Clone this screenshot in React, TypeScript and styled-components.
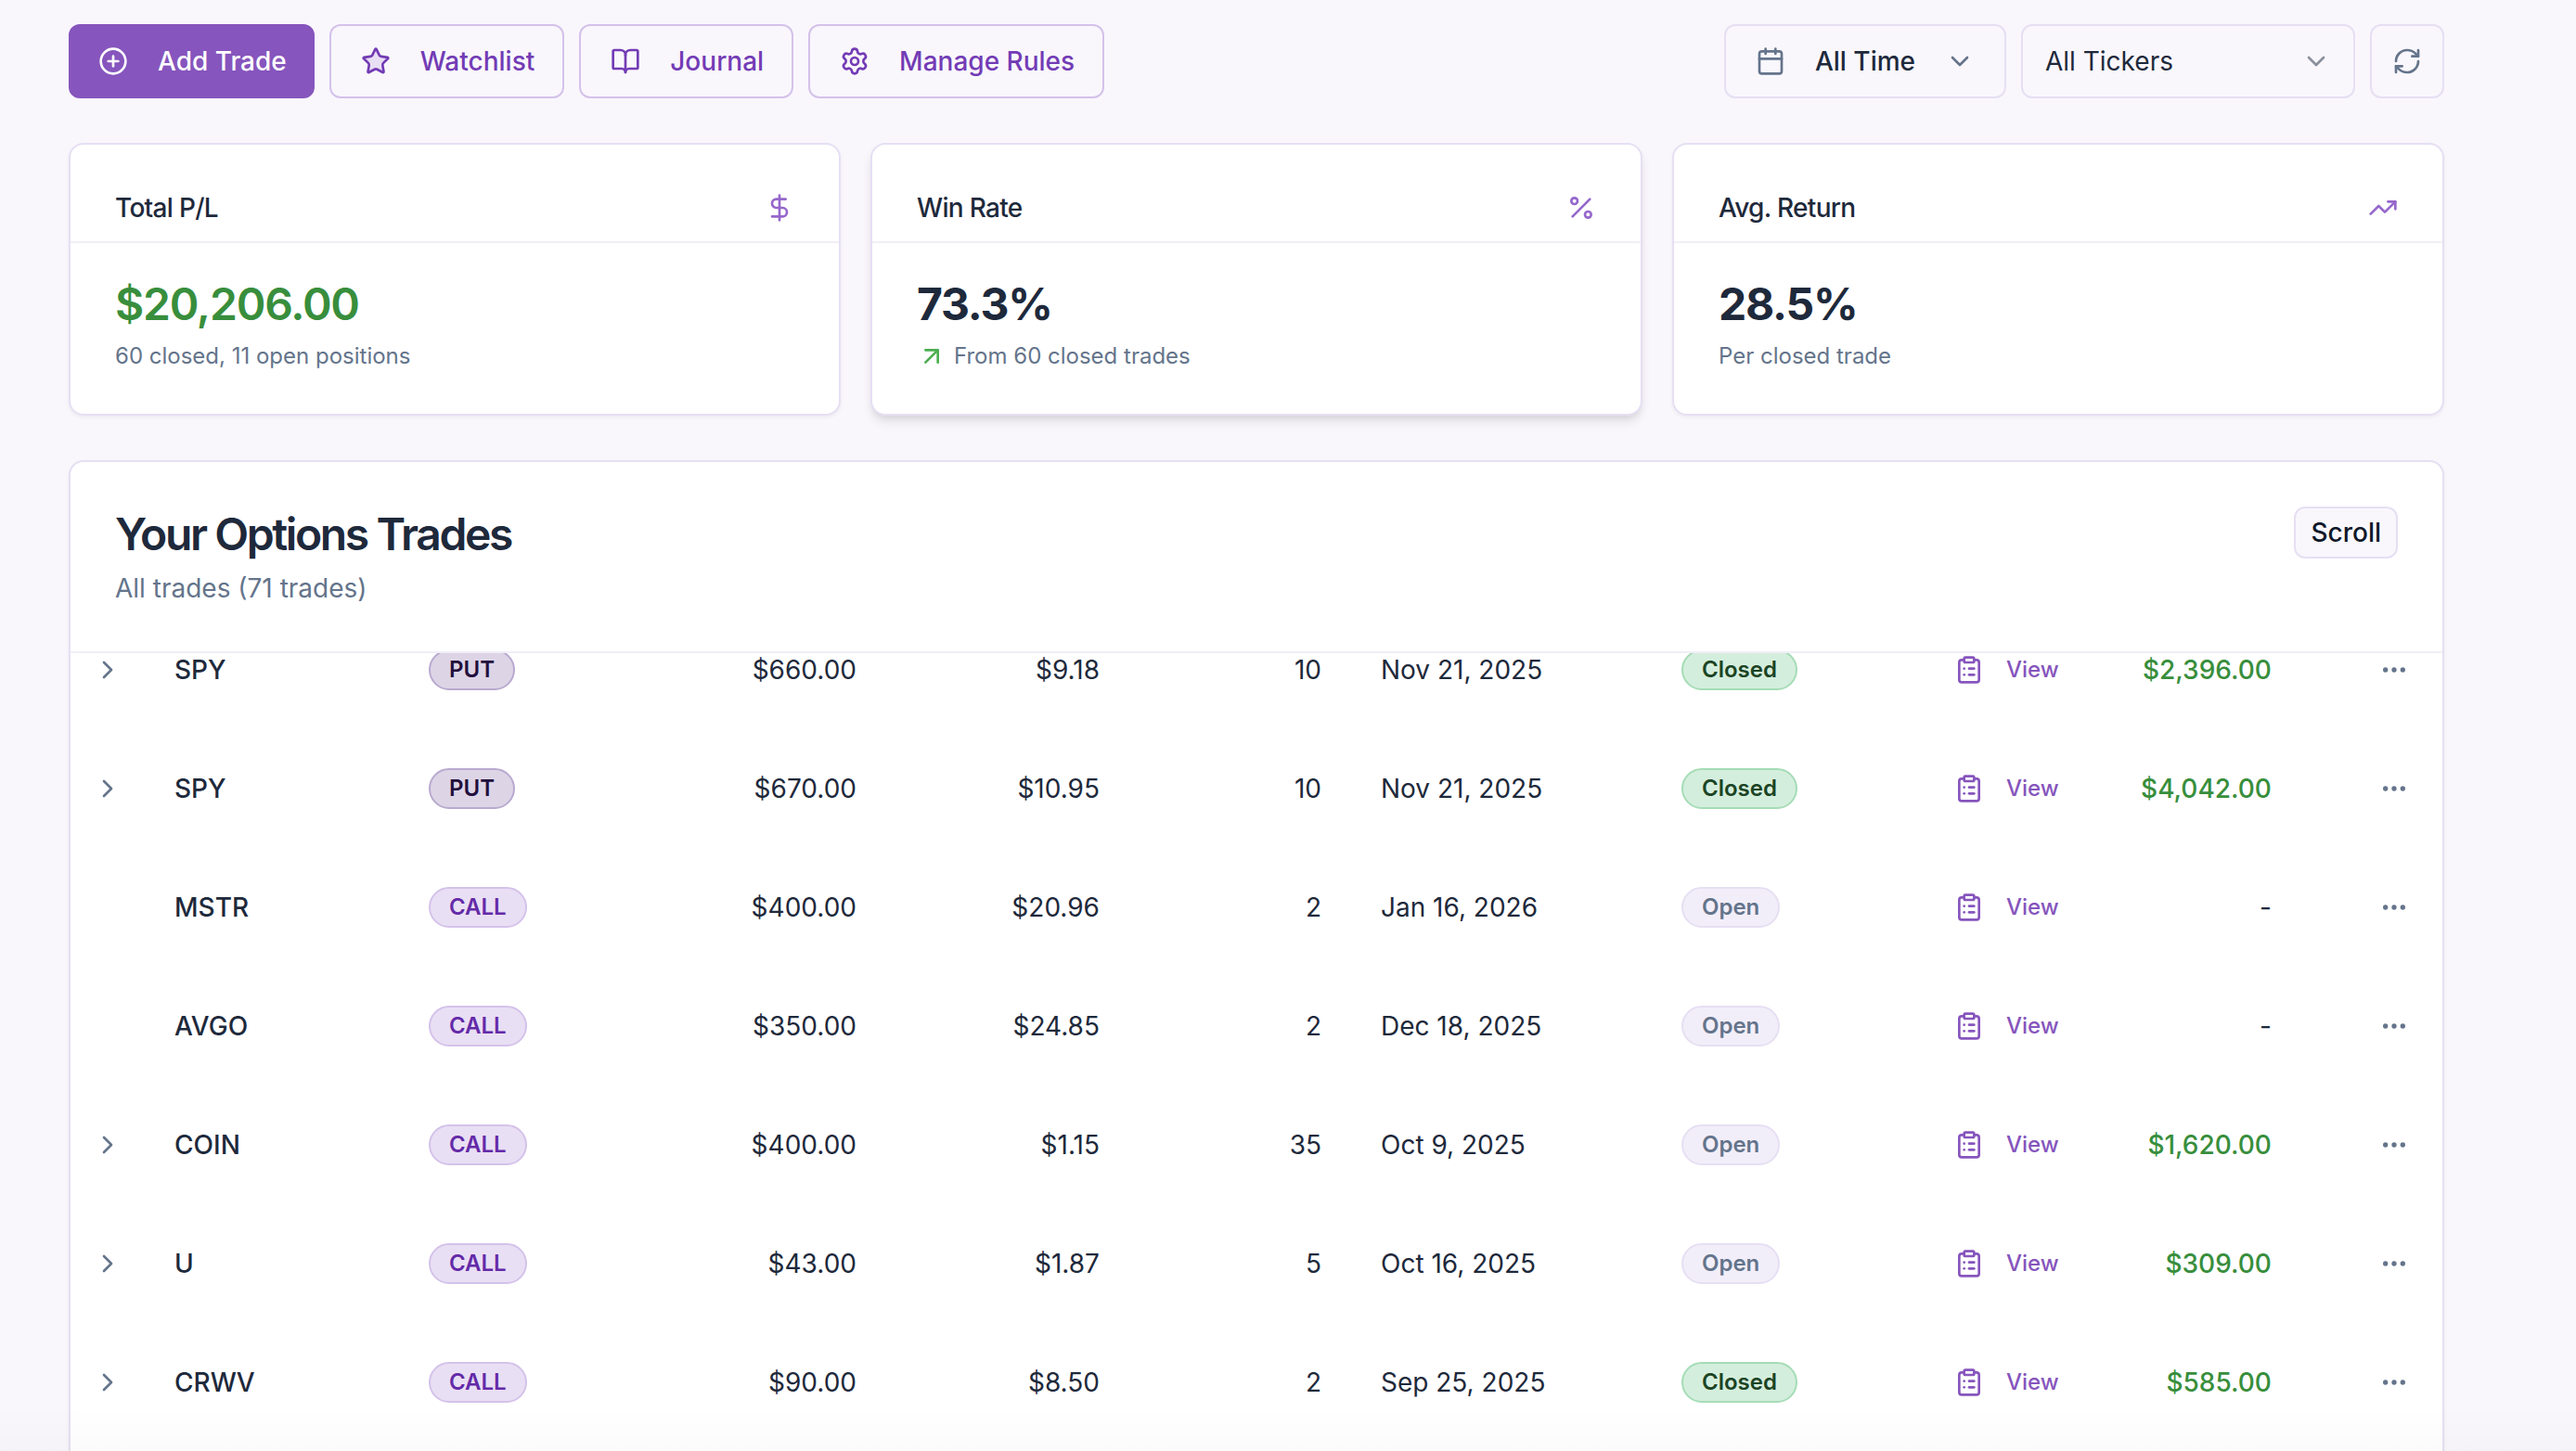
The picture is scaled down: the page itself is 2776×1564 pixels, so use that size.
import React from 'react';
import styled, { createGlobalStyle } from 'styled-components';
import {
  ArrowUpRight,
  BookOpen,
  Calendar,
  ChevronDown,
  ChevronRight,
  CirclePlus,
  ClipboardList,
  DollarSign,
  Ellipsis,
  Percent,
  RefreshCw,
  Settings,
  Star,
  TrendingUp,
} from 'lucide-react';

const color = {
  page: '#f9f7fc',
  ink: '#1e293b',
  muted: '#64748b',
  border: '#e6dff3',
  rule: '#f1eef8',
  violet: '#8655bd',
  violetDark: '#733bb5',
  violetSoft: '#d4c2ea',
  green: '#388e3c',
};

const Global = createGlobalStyle`
  * { box-sizing: border-box; }
  html, body, #root { height: 100%; }
  body {
    margin: 0;
    overflow: hidden;
    background: ${color.page};
    color: ${color.ink};
    font-family: Inter, "Liberation Sans", sans-serif;
    font-size: 28px;
    line-height: 40px;
  }
  button, select { font: inherit; color: inherit; }
  h1, h2, p { margin: 0; }
  svg { flex: none; }
`;

const Page = styled.main`
  position: relative;
  display: flex;
  flex-direction: column;
  height: 100%;
  padding: 26px 142px 0 74px;

  /* Soft shade over the content along the bottom edge. */
  &::after {
    content: '';
    position: absolute;
    inset: auto 0 0;
    height: 48px;
    background: linear-gradient(rgba(0, 0, 0, 0), rgba(0, 0, 0, 0.016));
    pointer-events: none;
  }
`;

const Toolbar = styled.div`
  display: flex;
  justify-content: space-between;
  gap: 32px;
`;

const ToolGroup = styled.div`
  display: flex;
  gap: 16px;
`;

const ActionButton = styled.button<{ $primary?: boolean }>`
  display: flex;
  align-items: center;
  gap: 32px;
  height: 80px;
  padding: ${(p) => (p.$primary ? '0 28px 0 30px' : '0 30px 0 32px')};
  border: 2px solid ${(p) => (p.$primary ? color.violet : color.violetSoft)};
  border-radius: 12px;
  background: ${(p) => (p.$primary ? color.violet : 'transparent')};
  color: ${(p) => (p.$primary ? '#fff' : color.violetDark)};
  font-weight: 500;
`;

const PeriodButton = styled.button`
  display: flex;
  align-items: center;
  height: 80px;
  padding: 0 32px;
  border: 2px solid ${color.border};
  border-radius: 12px;
  background: transparent;
  font-weight: 500;

  svg { color: ${color.muted}; }
  span { margin: 0 32px; }
`;

const SelectField = styled.label`
  display: grid;
  align-items: center;
  width: 360px;

  select, svg { grid-area: 1 / 1; }
  svg {
    justify-self: end;
    margin-right: 26px;
    color: #8a8f9c;
    pointer-events: none;
  }
`;

const TickerSelect = styled.select`
  appearance: none;
  width: 100%;
  height: 80px;
  padding: 0 24px;
  border: 2px solid ${color.border};
  border-radius: 12px;
  background: transparent;
`;

const IconButton = styled.button`
  display: flex;
  align-items: center;
  justify-content: center;
  width: 80px;
  height: 80px;
  padding: 0;
  border: 2px solid ${color.border};
  border-radius: 12px;
  background: transparent;

  svg { color: ${color.muted}; }
`;

const Stats = styled.section`
  display: grid;
  grid-template-columns: repeat(3, 1fr);
  gap: 32px;
  margin-top: 48px;
`;

const StatCard = styled.article<{ $raised?: boolean }>`
  border: 2px solid ${color.border};
  border-radius: 16px;
  background: #fff;
  box-shadow: ${(p) =>
    p.$raised
      ? '0 8px 12px -2px rgba(0, 0, 0, 0.1), 0 4px 8px -4px rgba(0, 0, 0, 0.1)'
      : '0 2px 4px rgba(0, 0, 0, 0.05)'};
`;

const StatHeader = styled.header`
  display: flex;
  align-items: center;
  justify-content: space-between;
  padding: 48px 48px 16px;
  border-bottom: 2px solid ${color.rule};

  svg { color: #9667cc; }
`;

const StatTitle = styled.h2`
  font-size: 28px;
  font-weight: 500;
  line-height: 40px;
  letter-spacing: -0.025em;
`;

const StatBody = styled.div`
  padding: 34px 48px 46px;
`;

const StatValue = styled.p<{ $gain?: boolean }>`
  color: ${(p) => (p.$gain ? color.green : color.ink)};
  font-size: 48px;
  font-weight: ${(p) => (p.$gain ? 600 : 700)};
  line-height: 64px;
  letter-spacing: -0.025em;
`;

const StatNote = styled.p`
  display: flex;
  align-items: center;
  gap: 8px;
  margin-top: 8px;
  color: ${color.muted};
  font-size: 24px;
  line-height: 32px;

  svg { color: #4caf50; }
`;

const TradesCard = styled.section`
  flex: 1;
  display: flex;
  flex-direction: column;
  min-height: 0;
  margin-top: 48px;
  border: 2px solid ${color.border};
  border-bottom: 0;
  border-radius: 16px 16px 0 0;
  background: #fff;
  box-shadow: 0 2px 4px rgba(0, 0, 0, 0.05);
`;

const TradesHeader = styled.header`
  display: flex;
  align-items: flex-start;
  justify-content: space-between;
  padding: 48px;
  border-bottom: 2px solid ${color.rule};
`;

const TradesTitle = styled.h1`
  font-size: 48px;
  font-weight: 600;
  line-height: 60px;
  letter-spacing: -0.05em;
`;

const TradesSubtitle = styled.p`
  margin-top: 8px;
  color: ${color.muted};
`;

const ScrollButton = styled.button`
  height: 56px;
  padding: 0 16px;
  border: 2px solid ${color.border};
  border-radius: 12px;
  background: ${color.page};
  color: #0f172a;
  font-weight: 500;
`;

/* Scrolled viewport: the top of the first visible row is hidden under the header. */
const TableViewport = styled.div`
  flex: 1;
  display: flex;
  flex-direction: column;
  min-height: 0;
  overflow: hidden;
`;

const Table = styled.table`
  width: 100%;
  margin-top: -46px;
  border-collapse: collapse;
  table-layout: fixed;
`;

const Cell = styled.td<{ $right?: boolean; $strong?: boolean }>`
  height: 128px;
  padding: 0 32px;
  text-align: ${(p) => (p.$right ? 'right' : 'left')};
  font-weight: ${(p) => (p.$strong ? 500 : 400)};
  white-space: nowrap;
`;

const ExpandCell = styled(Cell)`
  padding: 0 24px;
`;

const ActionCell = styled(Cell)`
  padding: 0 36px;
`;

const Gain = styled.span`
  color: ${color.green};
  font-weight: 500;
`;

const GhostButton = styled.button<{ $end?: boolean }>`
  display: flex;
  margin-left: ${(p) => (p.$end ? 'auto' : '0')};
  padding: 0;
  border: 0;
  background: none;
  color: ${color.muted};
`;

const ViewLink = styled.a`
  display: flex;
  align-items: center;
  gap: 24px;
  color: ${color.violet};
  font-size: 24px;
  font-weight: 500;
  text-decoration: none;
`;

const tones = {
  PUT: ['#ddd5e6', '#b9a9cf', '#220f3d'],
  CALL: ['#e9dff4', '#d4c2ea', '#642aa8'],
  Closed: ['#d4eedd', '#a5dcb6', '#1b4424'],
  Open: ['#f2eef9', '#e6dff3', '#64748b'],
};

const Badge = styled.span<{ $tone: keyof typeof tones }>`
  display: inline-flex;
  align-items: center;
  height: 44px;
  padding: 0 20px;
  border: 2px solid ${(p) => tones[p.$tone][1]};
  border-radius: 22px;
  background: ${(p) => tones[p.$tone][0]};
  color: ${(p) => tones[p.$tone][2]};
  font-size: 24px;
  font-weight: 600;
  line-height: 32px;
  vertical-align: middle;
`;

type Trade = {
  ticker: string;
  type: 'PUT' | 'CALL';
  strike: string;
  premium: string;
  contracts: number;
  expiry: string;
  status: 'Closed' | 'Open';
  pl?: string;
  expandable: boolean;
};

const trades: Trade[] = [
  { ticker: 'SPY', type: 'PUT', strike: '$660.00', premium: '$9.18', contracts: 10, expiry: 'Nov 21, 2025', status: 'Closed', pl: '$2,396.00', expandable: true },
  { ticker: 'SPY', type: 'PUT', strike: '$670.00', premium: '$10.95', contracts: 10, expiry: 'Nov 21, 2025', status: 'Closed', pl: '$4,042.00', expandable: true },
  { ticker: 'MSTR', type: 'CALL', strike: '$400.00', premium: '$20.96', contracts: 2, expiry: 'Jan 16, 2026', status: 'Open', expandable: false },
  { ticker: 'AVGO', type: 'CALL', strike: '$350.00', premium: '$24.85', contracts: 2, expiry: 'Dec 18, 2025', status: 'Open', expandable: false },
  { ticker: 'COIN', type: 'CALL', strike: '$400.00', premium: '$1.15', contracts: 35, expiry: 'Oct 9, 2025', status: 'Open', pl: '$1,620.00', expandable: true },
  { ticker: 'U', type: 'CALL', strike: '$43.00', premium: '$1.87', contracts: 5, expiry: 'Oct 16, 2025', status: 'Open', pl: '$309.00', expandable: true },
  { ticker: 'CRWV', type: 'CALL', strike: '$90.00', premium: '$8.50', contracts: 2, expiry: 'Sep 25, 2025', status: 'Closed', pl: '$585.00', expandable: true },
];

/* Share of the table's width taken by each column. */
const columns = [80, 274, 244, 281, 262, 239, 324, 294, 178, 228, 152];
const columnTotal = columns.reduce((sum, width) => sum + width, 0);

function TradeRow({ trade }: { trade: Trade }) {
  return (
    <tr>
      <ExpandCell>
        {trade.expandable && (
          <GhostButton aria-label={`Expand ${trade.ticker}`}>
            <ChevronRight size={32} />
          </GhostButton>
        )}
      </ExpandCell>
      <Cell $strong>{trade.ticker}</Cell>
      <Cell><Badge $tone={trade.type}>{trade.type}</Badge></Cell>
      <Cell $right>{trade.strike}</Cell>
      <Cell $right>{trade.premium}</Cell>
      <Cell $right>{trade.contracts}</Cell>
      <Cell>{trade.expiry}</Cell>
      <Cell><Badge $tone={trade.status}>{trade.status}</Badge></Cell>
      <Cell>
        <ViewLink href="#trade">
          <ClipboardList size={32} />
          View
        </ViewLink>
      </Cell>
      <Cell $right>{trade.pl ? <Gain>{trade.pl}</Gain> : '-'}</Cell>
      <ActionCell>
        <GhostButton $end aria-label={`More actions for ${trade.ticker}`}>
          <Ellipsis size={32} />
        </GhostButton>
      </ActionCell>
    </tr>
  );
}

export default function App() {
  return (
    <>
      <Global />
      <Page>
        <Toolbar>
          <ToolGroup>
            <ActionButton $primary><CirclePlus size={32} />Add Trade</ActionButton>
            <ActionButton><Star size={32} fill="#e9dff4" />Watchlist</ActionButton>
            <ActionButton><BookOpen size={32} />Journal</ActionButton>
            <ActionButton><Settings size={32} />Manage Rules</ActionButton>
          </ToolGroup>
          <ToolGroup>
            <PeriodButton>
              <Calendar size={32} />
              <span>All Time</span>
              <ChevronDown size={32} />
            </PeriodButton>
            <SelectField>
              <TickerSelect aria-label="Ticker" defaultValue="all">
                <option value="all">All Tickers</option>
              </TickerSelect>
              <ChevronDown size={32} />
            </SelectField>
            <IconButton aria-label="Refresh"><RefreshCw size={32} /></IconButton>
          </ToolGroup>
        </Toolbar>

        <Stats>
          <StatCard>
            <StatHeader><StatTitle>Total P/L</StatTitle><DollarSign size={32} /></StatHeader>
            <StatBody>
              <StatValue $gain>$20,206.00</StatValue>
              <StatNote>60 closed, 11 open positions</StatNote>
            </StatBody>
          </StatCard>
          <StatCard $raised>
            <StatHeader><StatTitle>Win Rate</StatTitle><Percent size={32} /></StatHeader>
            <StatBody>
              <StatValue>73.3%</StatValue>
              <StatNote><ArrowUpRight size={32} />From 60 closed trades</StatNote>
            </StatBody>
          </StatCard>
          <StatCard>
            <StatHeader><StatTitle>Avg. Return</StatTitle><TrendingUp size={32} /></StatHeader>
            <StatBody>
              <StatValue>28.5%</StatValue>
              <StatNote>Per closed trade</StatNote>
            </StatBody>
          </StatCard>
        </Stats>

        <TradesCard>
          <TradesHeader>
            <div>
              <TradesTitle>Your Options Trades</TradesTitle>
              <TradesSubtitle>All trades (71 trades)</TradesSubtitle>
            </div>
            <ScrollButton>Scroll</ScrollButton>
          </TradesHeader>
          <TableViewport>
            <Table>
              <colgroup>
                {columns.map((width, i) => (
                  <col key={i} style={{ width: `${(width / columnTotal) * 100}%` }} />
                ))}
              </colgroup>
              <tbody>
                {trades.map((trade, i) => <TradeRow key={i} trade={trade} />)}
              </tbody>
            </Table>
          </TableViewport>
        </TradesCard>
      </Page>
    </>
  );
}
